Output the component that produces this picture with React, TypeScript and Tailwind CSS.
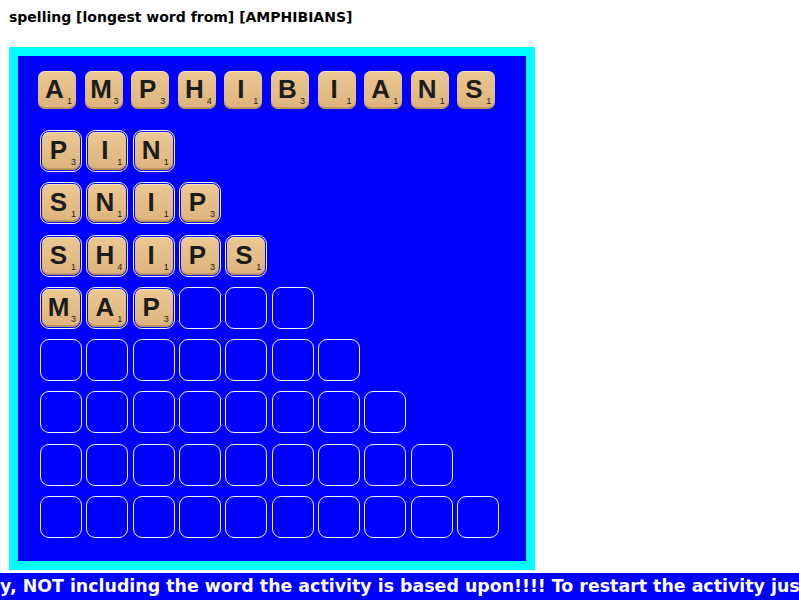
import React from "react";

const pts: Record<string, number> = { A: 1, M: 3, P: 3, H: 4, I: 1, B: 3, N: 1, S: 1 };

const source = "AMPHIBIANS".split("");
const found = ["PIN", "SNIP", "SHIPS", "MAP"];

function Tile({ ch, size }: { ch: string; size: "top" | "slot" }) {
  return (
    <div
      className={`relative rounded-[7px] bg-gradient-to-b from-[#ecc893] to-[#ddb37c] shadow-[inset_0_-2px_0_rgba(120,80,40,0.3),inset_0_1px_0_rgba(255,240,210,0.6)] ${
        size === "top" ? "h-[38px] w-[38px]" : "h-full w-full"
      }`}
    >
      <span className="absolute inset-x-0 top-[3px] pr-[5px] text-center font-['Liberation_Sans',Arial,sans-serif] text-[26px] font-bold leading-[30px] text-[#1c1c1c]">
        {ch}
      </span>
      <span className="absolute bottom-[3px] right-[4px] font-['Liberation_Sans',Arial,sans-serif] text-[9px] leading-none text-[#1c1c1c]">
        {pts[ch]}
      </span>
    </div>
  );
}

function Slot({ ch }: { ch?: string }) {
  return (
    <div className="h-[42px] w-[42px] rounded-[9px] border-[1.5px] border-[#f0f0ff] p-[1px]">
      {ch && <Tile ch={ch} size="slot" />}
    </div>
  );
}

export default function App() {
  const rows = [3, 4, 5, 6, 7, 8, 9, 10];
  return (
    <div className="relative h-[600px] w-[799px] overflow-hidden bg-white">
      <div className="px-[9px] pt-[9px] font-['DejaVu_Sans',Verdana,sans-serif] text-[14px] font-bold leading-[16px] text-black">
        spelling [longest word from] [AMPHIBIANS]
      </div>
      <div className="ml-[9px] mt-[22px] w-[526px] bg-[#00ffff] p-[9px]">
        <div className="bg-[#0000ff] pl-[20px] pt-[15px] pb-[23px]">
          <div className="flex gap-[8.6px]">
            {source.map((c, i) => (
              <Tile key={i} ch={c} size="top" />
            ))}
          </div>
          <div className="mt-[21px] flex flex-col gap-[10.3px] pl-[2px]">
            {rows.map((n, r) => (
              <div key={r} className="flex gap-[4.33px]">
                {Array.from({ length: n }).map((_, i) => (
                  <Slot key={i} ch={found[r]?.[i]} />
                ))}
              </div>
            ))}
          </div>
        </div>
      </div>
      <div className="mt-[3px] h-[27px] w-full overflow-hidden whitespace-nowrap bg-[#0000ff] font-['Comic_Sans_MS','DejaVu_Sans',sans-serif] text-[17.4px] font-bold leading-[27px] text-white">
        y, NOT including the word the activity is based upon!!!! To restart the activity jus
      </div>
    </div>
  );
}
